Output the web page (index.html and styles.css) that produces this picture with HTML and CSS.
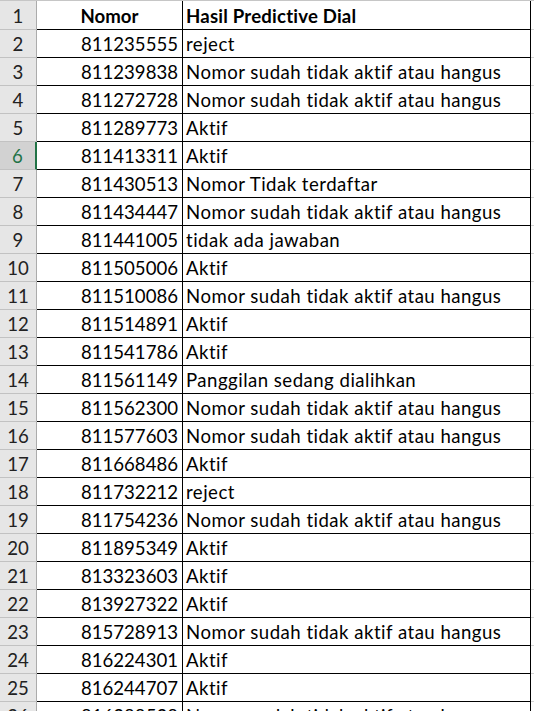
FILE: index.html
```html
<!DOCTYPE html>
<html>
<head>
<meta charset="utf-8">
<link rel="stylesheet" href="styles.css">
</head>
<body>
<div class="sheet">
  <div class="row head"><div class="rh">1</div><div class="ca hb">Nomor</div><div class="cb hb">Hasil Predictive Dial</div><div class="cc"></div></div>
  <div class="row"><div class="rh">2</div><div class="ca">811235555</div><div class="cb">reject</div><div class="cc"></div></div>
  <div class="row"><div class="rh">3</div><div class="ca">811239838</div><div class="cb">Nomor sudah tidak aktif atau hangus</div><div class="cc"></div></div>
  <div class="row"><div class="rh">4</div><div class="ca">811272728</div><div class="cb">Nomor sudah tidak aktif atau hangus</div><div class="cc"></div></div>
  <div class="row"><div class="rh">5</div><div class="ca">811289773</div><div class="cb">Aktif</div><div class="cc"></div></div>
  <div class="row"><div class="rh sel">6</div><div class="ca">811413311</div><div class="cb">Aktif</div><div class="cc"></div></div>
  <div class="row"><div class="rh">7</div><div class="ca">811430513</div><div class="cb">Nomor Tidak terdaftar</div><div class="cc"></div></div>
  <div class="row"><div class="rh">8</div><div class="ca">811434447</div><div class="cb">Nomor sudah tidak aktif atau hangus</div><div class="cc"></div></div>
  <div class="row"><div class="rh">9</div><div class="ca">811441005</div><div class="cb">tidak ada jawaban</div><div class="cc"></div></div>
  <div class="row"><div class="rh">10</div><div class="ca">811505006</div><div class="cb">Aktif</div><div class="cc"></div></div>
  <div class="row"><div class="rh">11</div><div class="ca">811510086</div><div class="cb">Nomor sudah tidak aktif atau hangus</div><div class="cc"></div></div>
  <div class="row"><div class="rh">12</div><div class="ca">811514891</div><div class="cb">Aktif</div><div class="cc"></div></div>
  <div class="row"><div class="rh">13</div><div class="ca">811541786</div><div class="cb">Aktif</div><div class="cc"></div></div>
  <div class="row"><div class="rh">14</div><div class="ca">811561149</div><div class="cb">Panggilan sedang dialihkan</div><div class="cc"></div></div>
  <div class="row"><div class="rh">15</div><div class="ca">811562300</div><div class="cb">Nomor sudah tidak aktif atau hangus</div><div class="cc"></div></div>
  <div class="row"><div class="rh">16</div><div class="ca">811577603</div><div class="cb">Nomor sudah tidak aktif atau hangus</div><div class="cc"></div></div>
  <div class="row"><div class="rh">17</div><div class="ca">811668486</div><div class="cb">Aktif</div><div class="cc"></div></div>
  <div class="row"><div class="rh">18</div><div class="ca">811732212</div><div class="cb">reject</div><div class="cc"></div></div>
  <div class="row"><div class="rh">19</div><div class="ca">811754236</div><div class="cb">Nomor sudah tidak aktif atau hangus</div><div class="cc"></div></div>
  <div class="row"><div class="rh">20</div><div class="ca">811895349</div><div class="cb">Aktif</div><div class="cc"></div></div>
  <div class="row"><div class="rh">21</div><div class="ca">813323603</div><div class="cb">Aktif</div><div class="cc"></div></div>
  <div class="row"><div class="rh">22</div><div class="ca">813927322</div><div class="cb">Aktif</div><div class="cc"></div></div>
  <div class="row"><div class="rh">23</div><div class="ca">815728913</div><div class="cb">Nomor sudah tidak aktif atau hangus</div><div class="cc"></div></div>
  <div class="row"><div class="rh">24</div><div class="ca">816224301</div><div class="cb">Aktif</div><div class="cc"></div></div>
  <div class="row"><div class="rh">25</div><div class="ca">816244707</div><div class="cb">Aktif</div><div class="cc"></div></div>
  <div class="row"><div class="rh">26</div><div class="ca">816288538</div><div class="cb">Nomor sudah tidak aktif atau hangus</div><div class="cc"></div></div>
</div>
</body>
</html>
```

FILE: styles.css
```css
html, body {
  margin: 0;
  padding: 0;
  background: #ffffff;
  overflow: hidden;
}
.sheet {
  font-family: Lato, "Open Sans", sans-serif;
  font-size: 18.6px;
  color: #000;
  border-top: 1px solid #c6c6c6;
}
.row {
  display: grid;
  grid-template-columns: 37px 146px 348px 1fr;
  height: 28px;
}
.row.head {
  height: 29px;
}
.row > div {
  box-sizing: border-box;
  display: flex;
  align-items: flex-end;
  padding-bottom: 2px;
  white-space: nowrap;
  overflow: hidden;
  line-height: 22px;
}
.rh {
  background: #e6e6e6;
  border-right: 1px solid #ababab;
  border-bottom: 1px solid #c2c2c2;
  justify-content: center;
  color: #222;
}
.rh.sel {
  background: #d2d2d2;
  color: #217346;
  border-right: 2px solid #217346;
}
.ca {
  border-right: 1px solid #000;
  border-bottom: 1px solid #000;
  justify-content: flex-end;
  padding-right: 4px;
}
.cb {
  border-right: 1px solid #000;
  border-bottom: 1px solid #000;
  padding-left: 3px;
  letter-spacing: 0.48px;
}
.cc {
  border-bottom: 1px solid #d4d4d4;
}
.hb {
  font-weight: bold;
}
.cb.hb {
  letter-spacing: 0.2px;
}
.head .ca {
  justify-content: center;
  padding-right: 0;
}
```
